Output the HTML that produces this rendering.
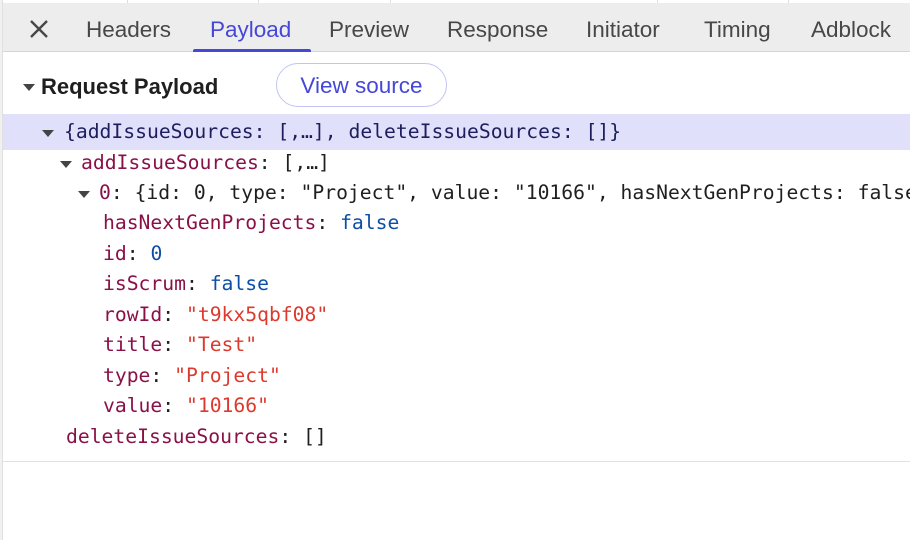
<!DOCTYPE html>
<html><head><style>
*{margin:0;padding:0;box-sizing:border-box}
body{width:910px;height:540px;background:#fff;position:relative;overflow:hidden;font-family:"Liberation Sans",sans-serif}
.a{position:absolute;white-space:pre}
.tab{position:absolute;top:18px;font-size:22.5px;color:#474747;line-height:24px}
.m{position:absolute;white-space:pre;font-family:"DejaVu Sans Mono",monospace;font-size:19.7px;line-height:24px;color:#1f1f1f}
.k{color:#8a1148}.s{color:#dc3a2e}.b{color:#0d4fa6}
.tri{position:absolute;width:0;height:0;border-left:6px solid transparent;border-right:6px solid transparent;border-top:7px solid #444}
</style></head><body>
<div class="a" style="left:0;top:0;width:910px;height:3px;background:#fff"></div>
<div class="a" style="left:127px;top:0;width:1px;height:3px;background:#ddd"></div>
<div class="a" style="left:258px;top:0;width:1px;height:3px;background:#ddd"></div>
<div class="a" style="left:390px;top:0;width:1px;height:3px;background:#ddd"></div>
<div class="a" style="left:657px;top:0;width:1px;height:3px;background:#ddd"></div>
<div class="a" style="left:788px;top:0;width:1px;height:3px;background:#ddd"></div>
<div class="a" style="left:0;top:3px;width:910px;height:49px;background:#ededed;border-bottom:1px solid #d6d6d6"></div>
<div class="a" style="left:0;top:0;width:3px;height:540px;background:#f1f1f1;border-right:1px solid #e0e0e0"></div>
<svg class="a" style="left:29px;top:19px" width="20" height="20" viewBox="0 0 20 20"><path d="M2 2L18 18M18 2L2 18" stroke="#474747" stroke-width="2.4"/></svg>
<div class="tab" style="left:86px">Headers</div>
<div class="tab" style="left:210px;color:#4547d8">Payload</div>
<div class="a" style="left:193px;top:49px;width:118px;height:3px;background:#4547d8;border-radius:2px 2px 0 0"></div>
<div class="tab" style="left:329px">Preview</div>
<div class="tab" style="left:447px">Response</div>
<div class="tab" style="left:586px">Initiator</div>
<div class="tab" style="left:704px">Timing</div>
<div class="tab" style="left:811px">Adblock</div>

<div class="tri" style="left:23px;top:84px"></div>
<div class="a" style="left:41px;top:75px;font-size:22px;font-weight:bold;color:#1f1f1f;line-height:24px">Request Payload</div>
<div class="a" style="left:276px;top:63px;width:171px;height:44px;border:1px solid #c3c4f3;border-radius:22px;color:#4547d8;font-size:22.5px;text-align:center;line-height:44px">View source</div>

<div class="a" style="left:3px;top:114px;width:907px;height:36px;background:#e0e0fa"></div>
<div class="tri" style="left:42px;top:130px"></div>
<div class="m" style="left:64px;top:120px;color:#1e1e5e">{addIssueSources: [,…], deleteIssueSources: []}</div>
<div class="tri" style="left:60px;top:161px"></div>
<div class="m" style="left:81px;top:151px"><span class="k">addIssueSources</span>: [,…]</div>
<div class="tri" style="left:78px;top:191px"></div>
<div class="m" style="left:99px;top:181px"><span class="k">0</span>: {id: 0, type: "Project", value: "10166", hasNextGenProjects: false}</div>
<div class="m" style="left:103px;top:211px"><span class="k">hasNextGenProjects</span>: <span class="b">false</span></div>
<div class="m" style="left:103px;top:242px"><span class="k">id</span>: <span class="b">0</span></div>
<div class="m" style="left:103px;top:272px"><span class="k">isScrum</span>: <span class="b">false</span></div>
<div class="m" style="left:103px;top:303px"><span class="k">rowId</span>: <span class="s">"t9kx5qbf08"</span></div>
<div class="m" style="left:103px;top:333px"><span class="k">title</span>: <span class="s">"Test"</span></div>
<div class="m" style="left:103px;top:364px"><span class="k">type</span>: <span class="s">"Project"</span></div>
<div class="m" style="left:103px;top:394px"><span class="k">value</span>: <span class="s">"10166"</span></div>
<div class="m" style="left:66px;top:425px"><span class="k">deleteIssueSources</span>: []</div>
<div class="a" style="left:3px;top:461px;width:907px;height:1px;background:#e2e2e2"></div>
</body></html>
